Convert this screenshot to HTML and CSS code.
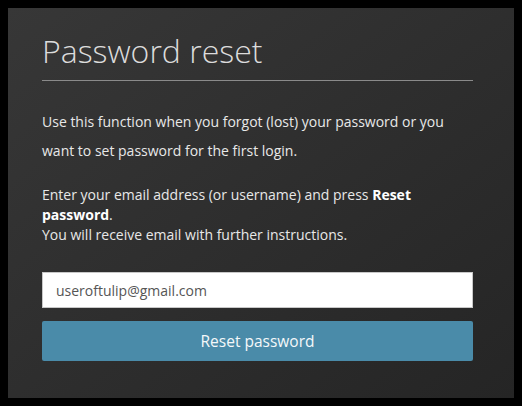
FILE: index.html
```html
<!DOCTYPE html>
<html lang="en">
<head>
<meta charset="utf-8">
<title>Password reset</title>
<link rel="stylesheet" href="styles.css">
</head>
<body>
<main class="panel">
  <h1 class="title">Password reset</h1>
  <p class="intro">Use this function when you forgot (lost) your password or you want to set password for the first login.</p>
  <p class="info">Enter your email address (or username) and press <b>Reset</b> <b>password</b>.<br>You will receive email with further instructions.</p>
  <form class="form">
    <input class="email" type="text" value="useroftulip@gmail.com">
    <button class="btn" type="button">Reset password</button>
  </form>
</main>
</body>
</html>
```
FILE: styles.css
```css
html, body {
  height: 100%;
}
body {
  margin: 0;
  padding: 8px;
  box-sizing: border-box;
  background: #000;
  font-family: "Open Sans", "Noto Sans", sans-serif;
}
.panel {
  height: 100%;
  box-sizing: border-box;
  padding: 21px 41px 0 34px;
  background: linear-gradient(to bottom right, #373737, #252525);
  display: flex;
  flex-direction: column;
}
.title {
  margin: 0;
  padding-bottom: 7px;
  border-bottom: 1px solid #8a8a8a;
  font-size: 32px;
  line-height: 44px;
  font-weight: 300;
  color: #dcdcdc;
}
.intro, .info {
  margin: 0;
  font-size: 14px;
  color: #e8e8e8;
}
.intro {
  margin-top: 26px;
  line-height: 29px;
}
.info {
  margin-top: 20px;
  line-height: 20px;
}
.info b {
  color: #fff;
  font-weight: 700;
}
.form {
  margin-top: 27px;
  display: flex;
  flex-direction: column;
  gap: 13px;
}
.email {
  height: 36px;
  box-sizing: border-box;
  margin: 0;
  padding: 0 13px;
  border: 1px solid #c8c8c8;
  background: #fff;
  font-family: inherit;
  font-size: 14px;
  color: #555;
  outline: none;
}
.btn {
  height: 40px;
  margin: 0;
  border: none;
  border-radius: 2px;
  background: #4a8ba9;
  color: #f4f8fa;
  font-family: inherit;
  font-size: 15.5px;
}
```
